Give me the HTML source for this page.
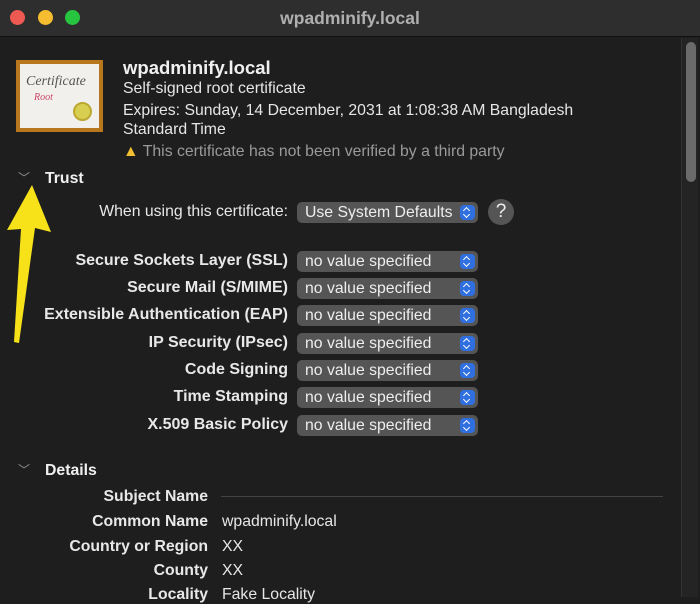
<!DOCTYPE html>
<html><head><meta charset="utf-8"><style>
*{margin:0;padding:0;box-sizing:border-box}
body{width:700px;height:597px;background:#1e1e1e;font-family:"Liberation Sans",sans-serif;color:#e6e6e6;position:relative;overflow:hidden}
.a{position:absolute;white-space:nowrap}
.tb{position:absolute;left:0;top:0;width:700px;height:37px;background:#2e2e2e;border-bottom:1px solid #111}
.dot{position:absolute;top:10px;width:15px;height:15px;border-radius:50%}
.lbl{position:absolute;right:412px;font-size:16px;font-weight:bold;color:#e8e8e8;white-space:nowrap}
.pop{position:absolute;left:297px;width:181px;height:21px;background:#555;border-radius:5px;font-size:15.8px;color:#eee;padding-left:8px;line-height:21px}
.pop i{position:absolute;right:3px;top:3px;width:15px;height:15px;background:#2f6fe0;border-radius:4px}
.pop i:before{content:"";position:absolute;left:4px;top:3px;width:4px;height:4px;border-left:1.5px solid #fff;border-top:1.5px solid #fff;transform:rotate(45deg)}
.pop i:after{content:"";position:absolute;left:4px;top:7px;width:4px;height:4px;border-right:1.5px solid #fff;border-bottom:1.5px solid #fff;transform:rotate(45deg)}
.dl{position:absolute;right:492px;font-size:15.8px;font-weight:bold;color:#e8e8e8;white-space:nowrap}
.dv{position:absolute;left:222px;font-size:15.8px;color:#e6e6e6}
</style></head><body>
<div class="tb">
<div class="dot" style="left:10px;background:#ee5a52"></div>
<div class="dot" style="left:38px;background:#f5bd2f"></div>
<div class="dot" style="left:65px;background:#27c53f"></div>
<div class="a" style="left:0;width:700px;text-align:center;top:8px;font-size:17.5px;font-weight:bold;color:#b0b0b0">wpadminify.local</div>
</div>
<div class="a" style="left:681px;top:38px;width:17px;height:559px;background:#242424;border-left:1px solid #333"></div>
<div class="a" style="left:686px;top:42px;width:10px;height:140px;background:#6b6b6b;border-radius:5px"></div>
<div class="a" style="left:16px;top:60px;width:87px;height:72px;background:#b8771c;padding:4px">
<div style="width:79px;height:64px;background:#f2f0ec;position:relative">
<div class="a" style="left:6px;top:10px;font-family:'Liberation Serif',serif;font-style:italic;font-size:14px;color:#555">Certificate</div>
<div class="a" style="left:14px;top:28px;font-family:'Liberation Serif',serif;font-style:italic;font-size:10px;color:#c46">Root</div>
<div class="a" style="left:53px;top:38px;width:19px;height:19px;border-radius:50%;background:#d8cf50;border:2px solid #bba830"></div>
</div></div>
<div class="a" style="left:123px;top:57px;font-size:18.5px;font-weight:bold;color:#f0f0f0">wpadminify.local</div>
<div class="a" style="left:123px;top:80px;font-size:15.8px">Self-signed root certificate</div>
<div class="a" style="left:123px;top:102px;font-size:15.8px">Expires: Sunday, 14 December, 2031 at 1:08:38 AM Bangladesh</div>
<div class="a" style="left:123px;top:121px;font-size:15.8px">Standard Time</div>
<div class="a" style="left:123px;top:143px;font-size:15.8px;color:#9a9a9a"><span style="color:#f0c030">▲</span> This certificate has not been verified by a third party</div>
<div class="a" style="left:18px;top:169px;font-size:12px;color:#999">﹀</div>
<div class="a" style="left:45px;top:170px;font-size:15.8px;font-weight:bold;color:#f0f0f0">Trust</div>
<div class="lbl" style="top:203px;font-weight:normal;font-size:15.8px">When using this certificate:</div>
<div class="pop" style="top:202px;width:181px">Use System Defaults<i></i></div>
<div class="a" style="left:488px;top:199px;width:26px;height:26px;border-radius:50%;background:#555;color:#eee;font-size:19px;text-align:center;line-height:26px">?</div>
<div class="lbl" style="top:252px">Secure Sockets Layer (SSL)</div><div class="pop" style="top:251px">no value specified<i></i></div>
<div class="lbl" style="top:279px">Secure Mail (S/MIME)</div><div class="pop" style="top:278px">no value specified<i></i></div>
<div class="lbl" style="top:306px">Extensible Authentication (EAP)</div><div class="pop" style="top:305px">no value specified<i></i></div>
<div class="lbl" style="top:334px">IP Security (IPsec)</div><div class="pop" style="top:333px">no value specified<i></i></div>
<div class="lbl" style="top:361px">Code Signing</div><div class="pop" style="top:360px">no value specified<i></i></div>
<div class="lbl" style="top:388px">Time Stamping</div><div class="pop" style="top:387px">no value specified<i></i></div>
<div class="lbl" style="top:416px">X.509 Basic Policy</div><div class="pop" style="top:415px">no value specified<i></i></div>
<div class="a" style="left:18px;top:461px;font-size:12px;color:#999">﹀</div>
<div class="a" style="left:45px;top:462px;font-size:15.8px;font-weight:bold;color:#f0f0f0">Details</div>
<div class="dl" style="top:488px">Subject Name</div>
<div class="a" style="left:221px;top:496px;width:442px;height:1px;background:#444"></div>
<div class="dl" style="top:513px">Common Name</div><div class="dv" style="top:513px">wpadminify.local</div>
<div class="dl" style="top:538px">Country or Region</div><div class="dv" style="top:538px">XX</div>
<div class="dl" style="top:562px">County</div><div class="dv" style="top:562px">XX</div>
<div class="dl" style="top:586px">Locality</div><div class="dv" style="top:586px">Fake Locality</div>
<svg class="a" style="left:0;top:0" width="700" height="597"><polygon points="32,185 51,232 35,228 19,343 14,342 21,229 7,230" fill="#f7e21a"/></svg>
</body></html>
